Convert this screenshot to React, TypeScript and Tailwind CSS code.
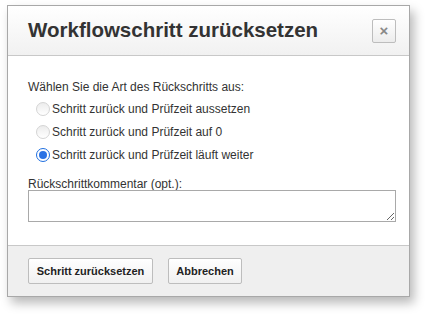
import { useState } from 'react';

const options = [
  'Schritt zurück und Prüfzeit aussetzen',
  'Schritt zurück und Prüfzeit auf 0',
  'Schritt zurück und Prüfzeit läuft weiter',
];

export default function App() {
  const [choice, setChoice] = useState(2);

  return (
    <div className="min-h-[316px] w-[428px] bg-white pl-[7px] pt-[5px] font-['Liberation_Sans',Arial,sans-serif] text-[#333]">
      <div className="flex h-[292px] w-[403px] flex-col border border-[#a8a8a8] bg-white shadow-[4px_6px_10px_rgba(0,0,0,0.28)]">
        <div className="flex h-[50px] items-center justify-between border-b border-[#c8c8c8] bg-gradient-to-b from-white to-[#f1f1f1] pl-[20px] pr-[13px]">
          <h1 className="text-[20.5px] font-bold leading-none text-[#333]">Workflowschritt zurücksetzen</h1>
          <button
            type="button"
            className="flex h-[24px] w-[24px] items-center justify-center rounded-[2px] border border-[#bdbdbd] bg-gradient-to-b from-white to-[#ececec] text-[15px] font-bold leading-none text-[#888]"
          >
            ×
          </button>
        </div>

        <div className="flex flex-1 flex-col px-[20px] pt-[25px] text-[12px] leading-none">
          <p className="mb-[8px] h-[12px]">Wählen Sie die Art des Rückschritts aus:</p>
          <div className="flex flex-col gap-[7px] pl-[8px]">
            {options.map((label, i) => (
              <label key={label} className="flex h-[16px] cursor-pointer items-center gap-[2px]">
                <input
                  type="radio"
                  name="art"
                  checked={choice === i}
                  onChange={() => setChoice(i)}
                  className="sr-only"
                />
                {choice === i ? (
                  <span className="flex h-[14px] w-[14px] items-center justify-center rounded-full border border-[#1f6fe0] bg-white">
                    <span className="h-[8px] w-[8px] rounded-full bg-[#2a72e4]" />
                  </span>
                ) : (
                  <span className="h-[14px] w-[14px] rounded-full border border-[#d4d4d4] bg-gradient-to-b from-[#ececec] to-white" />
                )}
                <span>{label}</span>
              </label>
            ))}
          </div>
          <p className="mt-[15px] h-[12px]">Rückschrittkommentar (opt.):</p>
          <textarea className="h-[32px] w-[368px] border border-[#a9a9a9] bg-white" />
        </div>

        <div className="flex h-[51px] items-center gap-[15px] border-t border-[#c8c8c8] bg-[#efefef] px-[20px]">
          <button
            type="button"
            className="h-[26px] w-[125px] rounded-[2px] border border-[#bdbdbd] bg-gradient-to-b from-white to-[#f0f0f0] text-[11px] font-bold text-[#222]"
          >
            Schritt zurücksetzen
          </button>
          <button
            type="button"
            className="h-[26px] w-[74px] rounded-[2px] border border-[#bdbdbd] bg-gradient-to-b from-white to-[#f0f0f0] text-[11px] font-bold text-[#222]"
          >
            Abbrechen
          </button>
        </div>
      </div>
    </div>
  );
}
